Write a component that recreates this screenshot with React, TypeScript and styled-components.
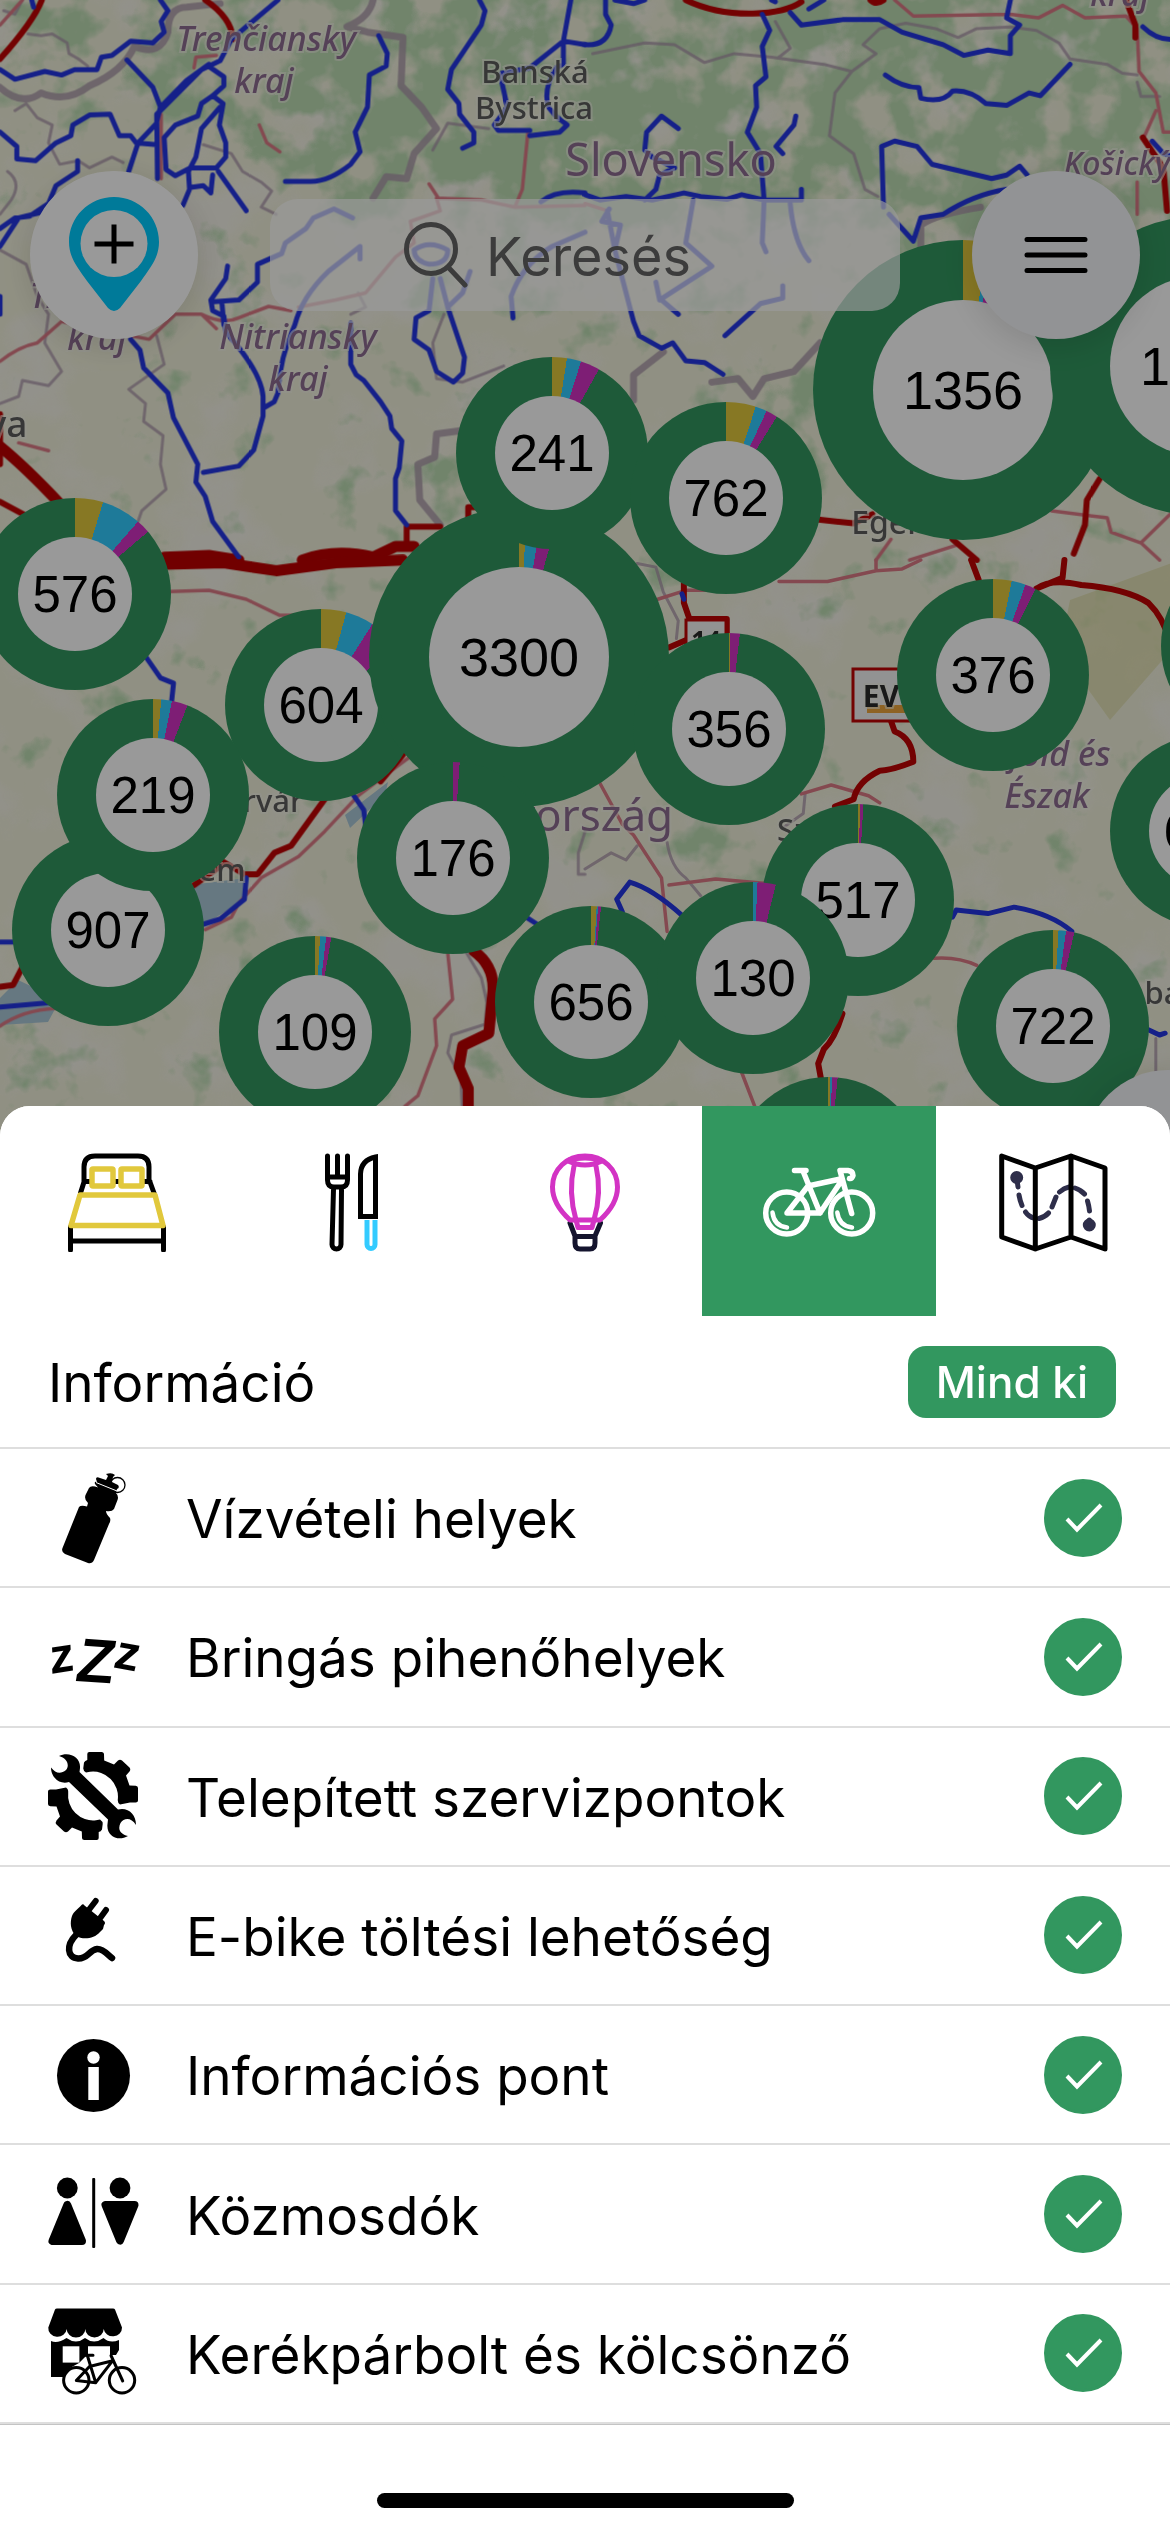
import React, { useState } from "react";
import styled, { createGlobalStyle } from "styled-components";

const GREEN = "#32975f";
const YELLOW = "#e1c83c";
const BLUE = "#33cbff";
const MAGENTA = "#d333c4";
const UI_FONT = '"Inter", "Roboto", "Liberation Sans", sans-serif';

const GlobalStyle = createGlobalStyle`
  *, *::before, *::after { box-sizing: border-box; }
  body { margin: 0; background: #fff; color: #000; font-family: ${UI_FONT}; }
  button, input { font: inherit; }
`;

const Screen = styled.main`
  display: flex;
  flex-direction: column;
  min-height: 100vh;
  overflow: hidden;
`;

/* ---------- map ---------- */

const MapArea = styled.section`
  position: relative;
  height: 1136px;
  flex: none;
  overflow: hidden;
  background: #f0efdc;
`;

const MapDrawing = styled.svg`
  display: block;
  width: 100%;
  height: 100%;
`;

const ClusterPin = styled.button<{ $x: number; $y: number; $r: number; $ring: string }>`
  position: absolute;
  left: ${(p) => p.$x - p.$r}px;
  top: ${(p) => p.$y - p.$r}px;
  width: ${(p) => p.$r * 2}px;
  height: ${(p) => p.$r * 2}px;
  display: flex;
  align-items: center;
  justify-content: center;
  padding: 0;
  border: 0;
  border-radius: 50%;
  background: ${(p) => p.$ring};
`;

const ClusterCount = styled.span<{ $large: boolean }>`
  display: flex;
  align-items: center;
  justify-content: center;
  width: ${(p) => (p.$large ? 180 : 114)}px;
  height: ${(p) => (p.$large ? 180 : 114)}px;
  border-radius: 50%;
  background: #fff;
  color: #000;
  font-family: "Liberation Sans", Arial, sans-serif;
  font-size: ${(p) => (p.$large ? 54 : 51)}px;
`;

const Toolbar = styled.header`
  position: absolute;
  inset: 171px 30px auto;
  display: flex;
  align-items: center;
  gap: 72px;
`;

const RoundButton = styled.button<{ $tint: string }>`
  flex: none;
  display: grid;
  place-items: center;
  width: 168px;
  height: 168px;
  padding: 0;
  border: 0;
  border-radius: 50%;
  background: ${(p) => p.$tint};
  box-shadow: 0 6px 36px rgba(0, 0, 0, 0.14);
`;

const LocateButton = styled(RoundButton)`
  position: absolute;
  right: -82px;
  bottom: -102px;
`;

const SearchBox = styled.label`
  flex: 1;
  display: flex;
  align-items: center;
  justify-content: center;
  gap: 18px;
  height: 112px;
  border-radius: 28px;
  background: rgba(255, 255, 255, 0.7);
  color: #646464;
`;

const SearchInput = styled.input`
  width: 280px;
  height: 80px;
  padding: 3px 0 0;
  border: 0;
  outline: 0;
  background: transparent;
  color: #646464;
  font-size: 54px;
  &::placeholder { color: #646464; opacity: 1; }
`;

const Dimmer = styled.div`
  position: absolute;
  inset: 0;
  background: rgba(0, 0, 0, 0.4);
  pointer-events: none;
`;

/* ---------- sheet ---------- */

const Sheet = styled.section`
  position: relative;
  flex: 1;
  display: flex;
  flex-direction: column;
  margin-top: -30px;
  border-radius: 30px 30px 0 0;
  background: #fff;
  overflow: hidden;
`;

const Tabs = styled.nav`
  display: grid;
  grid-template-columns: repeat(5, 1fr);
`;

const Tab = styled.button<{ $active: boolean }>`
  display: flex;
  justify-content: center;
  align-items: flex-start;
  height: 210px;
  padding: 46px 0 0;
  border: 0;
  background: ${(p) => (p.$active ? GREEN : "#fff")};
`;

const GroupHeader = styled.div`
  display: flex;
  align-items: center;
  justify-content: space-between;
  height: 133px;
  padding: 0 54px 0 48px;
  border-bottom: 2px solid #dedede;
`;

const GroupTitle = styled.h2`
  margin: 0;
  padding-top: 3px;
  font-size: 53px;
  font-weight: 400;
`;

const ToggleAll = styled.button`
  height: 72px;
  padding: 0 28px;
  border: 0;
  border-radius: 18px;
  background: ${GREEN};
  color: #fff;
  font-size: 44px;
  font-weight: 500;
`;

const Options = styled.ul`
  flex: 1;
  display: grid;
  grid-auto-rows: 1fr;
  margin: 0;
  padding: 0;
  list-style: none;
  border-bottom: 1px solid #c4c4c4;
`;

const Option = styled.li`
  display: flex;
  border-bottom: 2px solid #dedede;
`;

const OptionLabel = styled.label`
  flex: 1;
  display: flex;
  align-items: center;
  gap: 48px;
  padding: 0 48px;
`;

const OptionName = styled.span`
  flex: 1;
  padding-top: 3px;
  font-size: 53px;
  line-height: 64px;
  white-space: nowrap;
`;

const Check = styled.span`
  display: grid;
  place-items: center;
  > * { grid-area: 1 / 1; }
`;

const CheckInput = styled.input`
  appearance: none;
  width: 78px;
  height: 78px;
  margin: 0;
  border: 3px solid ${GREEN};
  border-radius: 50%;
  background: #fff;
  &:checked { background: ${GREEN}; }
`;

const CheckMark = styled.svg`
  position: relative;
  pointer-events: none;
`;

const HomeArea = styled.footer`
  display: flex;
  justify-content: center;
  align-items: flex-end;
  height: 107px;
  padding-bottom: 24px;
`;

const HomeBar = styled.div`
  width: 417px;
  height: 15px;
  border-radius: 8px;
  background: #000;
`;

/* ---------- map data ---------- */

type Cluster = { n: string; x: number; y: number; big?: boolean; cuts: [number, number, number] };

/* cuts: end angles of the yellow, blue and magenta slices; painted in list order */
const clusters: Cluster[] = [
  { n: "1356", x: 963, y: 390, big: true, cuts: [10, 12.5, 16] },
  { n: "1082", x: 1200, y: 366, big: true, cuts: [0, 0, 0] },
  { n: "576", x: 75, y: 594, cuts: [17, 41, 49.5] },
  { n: "604", x: 321, y: 705, cuts: [15.3, 32.4, 53] },
  { n: "3300", x: 519, y: 657, big: true, cuts: [3, 9, 15.5] },
  { n: "241", x: 552, y: 453, cuts: [9, 17.6, 29.3] },
  { n: "762", x: 726, y: 498, cuts: [18, 25, 32] },
  { n: "356", x: 729, y: 729, cuts: [0.8, 0.8, 6.5] },
  { n: "176", x: 453, y: 858, cuts: [0, 0, 4] },
  { n: "907", x: 108, y: 930, cuts: [0, 0, 0] },
  { n: "219", x: 153, y: 795, cuts: [4.9, 11.4, 21] },
  { n: "109", x: 315, y: 1032, cuts: [3, 6.7, 9.8] },
  { n: "656", x: 591, y: 1002, cuts: [3.4, 4.2, 6] },
  { n: "517", x: 858, y: 900, cuts: [1.2, 1.2, 3.2] },
  { n: "130", x: 753, y: 978, cuts: [0, 2.7, 13.7] },
  { n: "376", x: 993, y: 675, cuts: [11.2, 19.8, 26.3] },
  { n: "722", x: 1053, y: 1026, cuts: [3.3, 7.8, 12.8] },
  { n: "641", x: 1206, y: 831, cuts: [0, 0, 0] },
  { n: "388", x: 1257, y: 646, cuts: [0, 0, 0] },
  { n: "254", x: 828, y: 1173, cuts: [1.3, 2.5, 5.8] },
];

const ring = ([a, b, c]: [number, number, number]) =>
  `conic-gradient(${YELLOW} 0 ${a}deg, ${BLUE} ${a}deg ${b}deg, ${MAGENTA} ${b}deg ${c}deg, ${GREEN} ${c}deg)`;

type TileData = {
  at: [number, number];
  border?: string;
  borderWide?: string;
  pink?: string;
  red?: string;
  redWide?: string;
  blue?: string;
};

const tiles: TileData[] = [
  {
    at: [0, 0],
    border:
      "M75 95L110 100 140 95 180 120 185 150 210 165 235 185M60 0L40 40 10 30M40 310L70 290 100 330 140 350 130 400 160 460 210 450 240 470 300 440 330 455M545 405L620 430 650 480 700 510 728 535 700 580 740 600M20 480Q60 510 30 560L0 600M0 700L70 740 100 830 130 880 120 960 165 1040 130 1080 60 1065 50 1110 0 1130M420 940L440 1020 345 1090 390 1130 385 1180 437 1220 430 1300 445 1370 380 1430 370 1460M960 820L980 860 940 880M1190 880L1160 960 1170 1060 1240 1070 1350 1025M1310 360L1200 345 1160 420",
    borderWide:
      "M0 245Q60 300 110 260Q180 290 240 240Q330 200 360 130Q430 160 450 90Q450 20 500 20L590 10M1000 0Q990 50 930 75L985 90 1080 105 1075 240 1130 300 1170 360 1110 430 1090 500 1035 495 1000 555M1240 1205L1170 1215 1165 1280 1120 1300 1125 1400 1180 1470",
    pink:
      "M0 1012Q50 970 100 960L165 900 300 930 400 950 470 880 540 880 580 920M540 880Q600 910 640 890L720 858 780 870M800 860L900 840 980 820 1060 720 1110 680 1100 620 1180 590 1170 555 1290 560M1150 515L1175 555M1290 560L1380 580 1400 530 1415 370M1380 580L1568 575M695 350L715 400 750 425M520 190L525 160 580 155M432 320V500M50 1240L130 1262M0 70L60 0",
    red: "M112 0Q90 60 0 165M550 0Q620 50 625 110M0 1405L80 1450M1090 1530L1090 1475 1180 1475M1255 1470V1420H1300M0 1160V1300",
    redWide: "M0 1250Q70 1310 160 1410M440 1560L560 1555 640 1568M810 1568Q900 1535 1000 1560L1060 1530 1110 1530",
    blue:
      "M85 0L90 20M430 0L450 30 432 60 440 90 410 120 350 115 300 155 272 160 260 195 200 195 165 210 120 200 40 222 0 195M340 168L410 245 430 300 420 340M745 0L620 110 590 170 540 195 420 320 422 500M565 190L600 215 600 240 570 268 540 290 530 325 470 350 440 385 445 475 470 492 510 470 580 470 605 440 605 400 588 350 598 290 570 268M430 300L500 225 560 180M590 300L540 360 525 440 505 480 508 530 490 575M585 480L660 590M510 525L545 520 565 540 570 490M0 370L45 410 45 445 95 450 150 400 190 380 195 350 240 322 295 320 320 380 350 380 365 400 420 405M420 345L370 400 345 480M208 450V480L150 520 130 570 80 605 40 610 0 640M0 690L50 610 130 590M0 880V830M1015 100L1038 150 1035 185 990 210 985 300 952 370 965 425 940 460Q880 510 830 508H765M1285 0L1300 30 1290 70 1210 195 1200 250 1230 290 1232 320 1270 370 1270 400 1240 415M1530 0L1510 115 1510 180 1490 190Q1455 250 1470 300L1490 325 1520 350 1500 370 1420 380M1568 125L1510 115 1420 190 1345 205 1345 230 1360 300 1325 350 1335 365H1420M945 610L895 585 840 610 820 640 765 680 755 710 690 740 690 790 640 840 575 845M610 745L605 780 565 840 570 870 600 885 605 930Q700 1040 705 1110L705 1165 680 1260 640 1305 545 1323M595 850L600 910M965 725V690L880 760Q810 830 790 910Q750 1000 745 1100L735 1125 710 1140M350 950L375 980 385 1030 450 1100 465 1170 530 1300 525 1350 550 1390 570 1460 640 1560M940 905V1020L955 1050 975 1065 1020 1125 1045 1165 1050 1200 1077 1235 1070 1310 1060 1340V1430L1090 1470M1160 780L1150 870 1115 890 1110 950 1150 980 1170 1040 1215 1070 1240 1045 1245 1000 1200 860 1180 780M1260 760L1240 820 1200 860M1375 890L1370 830Q1400 740 1480 690L1568 650M1450 565Q1490 530 1568 540M1110 700Q1150 670 1200 700Q1200 740 1150 740Q1110 730 1110 700",
  },
  {
    at: [585, 0],
    border:
      "M20 150L160 120 240 125 320 175 400 150 500 160 640 180 715 200 780 150 745 125 790 80 860 65M510 60L550 135 520 160M715 200L670 260 655 380 720 430 750 530 785 550M860 65L940 80 1000 105 1050 80 1140 75 1210 85 1270 120 1300 165 1400 180 1440 205 1480 210M1480 230L1490 270 1540 270",
    borderWide: "M130 1120L130 1050 210 985M340 1070L410 1060 450 1110 480 1060 560 1040 630 960M900 690V630Q940 600 1060 580",
    pink:
      "M830 0L880 45 1140 40 1215 50 1280 15 1340 50 1450 45 1480 80 1485 200 1530 260 1550 370 1568 370M1530 310L1500 380M1480 510V600M1140 40L1215 50M0 570L60 590M1250 1430L1400 1450 1410 1490 1490 1520 1568 1440M1490 1520L1540 1568M870 1568L1000 1525M780 1568L820 1510",
    red: "M270 0Q350 40 450 38Q540 35 580 5M765 0Q780 15 800 0M1450 0L1475 70V105M1495 385L1550 470 1560 590M625 1455L720 1465 770 1440M985 1510L1050 1568M1380 1340L1345 1400 1340 1470 1310 1550",
    blue:
      "M55 0V40L70 70Q60 130 0 125M475 40L495 85 475 130 485 215 457 240 460 300 435 370 470 430 480 560M550 35L580 70 690 55 790 55 850 90 960 125 1015 155 1080 140 1140 150 1140 100 1165 70 1130 50 1140 0M600 25L640 0M80 0L130 10 160 0M805 210Q850 245 895 245L900 275Q960 290 985 255Q1030 250 1075 290L1130 295 1190 260 1220 268 1300 180M250 360L205 325 165 370 160 420 180 440 240 470 200 490 190 530 160 560M565 325L560 350 512 410 530 430M0 545L40 560 110 550 180 560 265 540 310 550 380 558 420 545 480 560H580V530M800 580L795 410 830 395 890 410 930 460 1090 500 1130 490 1165 465 1185 490M815 600L880 675 900 610 960 600Q1040 545 1130 530M60 590L80 700 130 900 145 940 205 975 235 960 270 1010 320 1015 370 1048M65 585L45 620 95 630 80 700M290 560L270 680 340 745 200 840 190 790M205 840L250 880M480 560L475 680 485 705M550 570Q560 680 600 730M530 800V835L470 850 375 940M1495 75Q1530 110 1568 110M1520 395L1550 430 1568 435M500 0L510 5",
  },
  {
    at: [0, 560],
    border: "M1250 1100L1290 1170 1305 1240 1300 1300 1210 1330 1200 1380 1235 1450 1240 1568M1568 760L1550 820 1550 880 1568 880",
    pink: "M455 88L560 85 660 110 750 155H820M1100 550L960 660 870 760 800 830 700 890 640 960 620 1000 550 1035M0 1305Q60 1260 150 1255M1200 1100L1213 1230 1165 1285 1170 1360 1120 1500 1085 1530",
    red: "M870 670L780 800 735 820 690 880 655 880 590 840M520 910L600 850M0 1195L35 1190 60 1140M1080 545L1020 620",
    redWide: "M1270 1095Q1330 1140 1320 1220L1310 1325 1240 1360 1230 1420 1255 1480V1568M440 12L600 8 740 30 900 8 1080 0",
    blue: "M390 270L430 330 465 345 460 395M945 655L975 700 980 745M660 890L655 950 590 1005 545 1020M0 1070H40M0 1252L130 1240M1410 1000L1440 1020",
  },
  {
    at: [585, 560],
    border: "M140 10L190 20 210 90 250 170 245 220M590 655L585 710 530 750M220 790Q230 860 270 890L310 940M0 865L70 820 110 840 140 800M1530 1340V1430",
    pink: "M520 60L650 60 780 30 850 25 900 0M780 0V30M195 110L270 85H340M40 625L100 740 130 770 205 890 220 1040M580 655L660 630 760 660 790 680M225 910L350 893 480 905M935 1115Q1000 1110 1050 1135M420 1435L455 1530",
    red: "M265 65V120L280 165H380V205M225 245L270 225M1035 0L1055 55M1285 0L1280 50 1210 80M1210 80Q1250 50 1330 70Q1450 80 1510 120Q1550 160 1568 230M820 450L830 480Q880 500 880 565Q820 590 790 590Q730 620 720 670L670 690M690 1270Q670 1340 640 1370L625 1410 632 1450",
    blue: "M100 985L85 950 120 902Q180 920 260 995M985 1000L995 980 1080 990 1150 972Q1250 990 1305 1040M1510 1315L1540 1330 1555 1325M260 95L265 110",
  },
];

const K = [585 / 1568, 560 / 1568];

const labels = [
  { t: "Trenčiansky", x: 266, y: 51, s: 34, area: true },
  { t: "kraj", x: 264, y: 93, s: 34, area: true },
  { t: "Trnavský", x: 97, y: 308, s: 34, area: true },
  { t: "kraj", x: 97, y: 350, s: 34, area: true },
  { t: "Nitriansky", x: 298, y: 349, s: 34, area: true },
  { t: "kraj", x: 298, y: 391, s: 34, area: true },
  { t: "Košický", x: 1117, y: 175, s: 32, area: true },
  { t: "kraj", x: 1120, y: 6, s: 34, area: true },
  { t: "föld és", x: 1060, y: 766, s: 34, area: true },
  { t: "Észak", x: 1047, y: 808, s: 34, area: true },
  { t: "Banská", x: 535, y: 83, s: 31 },
  { t: "Bystrica", x: 534, y: 119, s: 31 },
  { t: "Eger", x: 886, y: 534, s: 32 },
  { t: "Székesfehérvár", x: 190, y: 812, s: 31 },
  { t: "em", x: 222, y: 881, s: 31 },
  { t: "va", x: 7, y: 437, s: 37 },
  { t: "Sz", x: 793, y: 841, s: 31 },
  { t: "bá", x: 1163, y: 1004, s: 31 },
];

const countries = [
  { t: "Slovensko", x: 671, y: 176, s: 45 },
  { t: "Magyarország", x: 526, y: 831, s: 44 },
];

function Tile({ tile }: { tile: TileData }) {
  const line = (d: string | undefined, stroke: string, w: number, o = 1) =>
    d && <path d={d} stroke={stroke} strokeWidth={w} opacity={o} vectorEffect="non-scaling-stroke" />;
  return (
    <g
      transform={`translate(${tile.at[0]} ${tile.at[1]}) scale(${K[0]} ${K[1]})`}
      fill="none"
      strokeLinecap="round"
      strokeLinejoin="round"
    >
      {line(tile.border, "#a893a8", 3, 0.75)}
      {line(tile.borderWide, "#ad9dab", 7, 0.85)}
      {line(tile.pink, "#dc7a86", 3.5)}
      {line(tile.red, "#c00404", 6)}
      {line(tile.redWide, "#bc0000", 11)}
      {line(tile.blue, "#2436e4", 5)}
    </g>
  );
}

function BaseMap() {
  return (
    <MapDrawing viewBox="0 0 1170 1136" preserveAspectRatio="xMinYMin slice" aria-hidden="true">
      <defs>
        <filter id="forest" x="0" y="0" width="1170" height="1136" filterUnits="userSpaceOnUse">
          <feGaussianBlur in="SourceAlpha" stdDeviation="26" result="area" />
          <feTurbulence type="fractalNoise" baseFrequency="0.022" numOctaves="4" seed="8" />
          <feColorMatrix values="0 0 0 0 0  0 0 0 0 0  0 0 0 0 0  1 0 0 0 0" result="noise" />
          <feComposite in="area" in2="noise" operator="arithmetic" k2="0.5" k3="1" />
          <feComponentTransfer result="patches">
            <feFuncA type="linear" slope="5" intercept="-3.9" />
          </feComponentTransfer>
          <feFlood floodColor="#bcdcb3" />
          <feComposite in2="patches" operator="in" />
        </filter>
        <filter id="towns" x="0" y="0" width="1170" height="1136" filterUnits="userSpaceOnUse">
          <feTurbulence type="fractalNoise" baseFrequency="0.012" numOctaves="4" seed="21" />
          <feColorMatrix values="0 0 0 0 0.92  0 0 0 0 0.9  0 0 0 0 0.88  4 0 0 0 -2" />
        </filter>
      </defs>
      <rect width="1170" height="1136" fill="#f1f1db" />
      <rect width="1170" height="1136" filter="url(#towns)" opacity="0.6" />
      <g filter="url(#forest)">
        <rect width="1170" height="1136" opacity="0.28" />
        <path d="M-40-40H170L150 170 60 110-40 160Z" opacity="0.45" />
        <path d="M170-40H1210V250L1000 240 850 260 760 230 500 220 280 190 230 130 130 100Z" opacity="0.7" />
        <path d="M290-40H1210V190H560L330 180Z" opacity="0.6" />
        <path d="M440 190H700L660 330 560 350 440 320Z" opacity="0.4" />
        <path d="M690 380L860 330 840 520 700 440Z" opacity="0.6" />
        <path d="M420 440H520V560H430Z" opacity="0.7" />
        <path d="M120 220H260L230 300H140Z" opacity="0.4" />
        <path d="M300 580H400V640H300ZM0 960H110V1136H0Z" opacity="0.4" />
        <path d="M650 820H780V900H660Z" opacity="0.4" />
      </g>
      <path d="M1070 600L1180 560V640L1110 720 1060 650Z" fill="#dbd89e" opacity="0.6" />
      <g fill="#aac8d8">
        <path d="M190 885L246 878 244 900 205 924 186 920Z" />
        <path d="M0 998L18 980 60 1000 48 1022 0 1025Z" />
        <path d="M345 815L388 782 385 795 350 828Z" />
      </g>
      {tiles.map((t) => (
        <Tile key={t.at.join()} tile={t} />
      ))}
      <g stroke="#c00404" strokeWidth="3" fill="#f4f4f4">
        <rect x="686" y="620" width="40" height="44" />
        <rect x="853" y="669" width="64" height="52" />
      </g>
      <rect x="867" y="705" width="60" height="8" fill="#eda63c" />
      <g fontFamily='"Noto Sans", sans-serif' textAnchor="middle" stroke="#f3f3e8" strokeWidth="4" paintOrder="stroke" strokeOpacity="0.6">
        {labels.map((l) => (
          <text
            key={l.t + l.y}
            x={l.x}
            y={l.y}
            fontSize={l.s}
            fill={l.area ? "#8e6d92" : "#5c5c5c"}
            fontStyle={l.area ? "italic" : "normal"}
            fontWeight={500}
          >
            {l.t}
          </text>
        ))}
        {countries.map((l) => (
          <text key={l.t} x={l.x} y={l.y} fontSize={l.s} fill="#8e6d92">
            {l.t}
          </text>
        ))}
        <text x="881" y="707" fontSize="30" fontWeight="700" fill="#2a2a2a">EV</text>
        <text x="706" y="650" fontSize="26" fontWeight="700" fill="#2a2a2a">14</text>
      </g>
    </MapDrawing>
  );
}

/* ---------- icons ---------- */

const TabIcon = ({ children }: { children: React.ReactNode }) => (
  <svg width="120" height="100" viewBox="-10 0 120 100" fill="none" strokeWidth="5" strokeLinecap="round" strokeLinejoin="round" aria-hidden="true">
    {children}
  </svg>
);

const BedIcon = () => (
  <TabIcon>
    <path stroke="#000" d="M17 30V15Q17 4 28 4H71Q82 4 82 15V30M17 29.5H83M17 30L13.5 41M83 30L87 41M3.5 75V98M96.5 75V98M4 89H96" />
    <g stroke={YELLOW} strokeWidth="5.5" fill="#fff">
      <rect x="25" y="17" width="21" height="17" rx="1" />
      <rect x="54" y="17" width="21" height="17" rx="1" />
      <path d="M13 43H88L96 73.5H4Z" />
    </g>
  </TabIcon>
);

const CutleryIcon = () => (
  <TabIcon>
    <g stroke="#000">
      <path d="M26.5 4V28Q26.5 35 33 35H40Q46.5 35 46.5 28V4M36.5 4V24M26.5 25H46.5M32.5 37L31 92.5A4.5 4.5 0 0 0 40 92.5L40.5 37" />
      <path strokeLinejoin="miter" d="M74.5 5V64.5H59.5V22Q60 8 74.5 5Z" />
    </g>
    <path stroke={BLUE} strokeLinecap="butt" d="M66 68V92.5A4 4 0 0 0 74 92.5V68" />
  </TabIcon>
);

const BalloonIcon = () => (
  <TabIcon>
    <path stroke="#14142e" d="M35 71L40 84M65.5 71L60 84M40 84.5H60V91Q60 97 55 97H45Q40 97 40 91Z" />
    <g stroke={MAGENTA}>
      <path d="M35 68C24 58 17.5 46 17.5 35C17.5 17 32 4 50 4C68 4 82.5 17 82.5 35C82.5 46 76 58 65 68Z" />
      <path d="M33 9Q50 17 67 9M39 14Q33 40 41 68L43 75.5H57L59 68Q67 40 61 14M34 8Q50 4 66 8" />
    </g>
  </TabIcon>
);

const BikeIcon = () => (
  <TabIcon>
    <g stroke="#fff" strokeWidth="5.5">
      <circle cx="17.7" cy="61" r="21" />
      <circle cx="82.7" cy="61" r="21" />
      <path d="M25.5 18.5H37M34 19L51 61H18L39 34 71.5 27M51 61L73 28M71 18.5L82.7 61.5M71 18.5H79Q84 19 84 23.5Q83 27 80.5 26.5" />
      <path strokeWidth="4.5" d="M3.5 60.5Q5 74 18 75.5M68.3 60.5Q70 74 83 75.5" />
    </g>
  </TabIcon>
);

const RouteMapIcon = () => (
  <TabIcon>
    <g stroke="#2e2e4a">
      <path d="M16 43Q17 49 19 53.5M22.5 60Q26 65 31 66M36 66.5Q42 65 45.5 61M49 55Q51 50 53 45M56.5 40Q61 36 66 35M72 36Q78 38 81.5 42M84.5 49Q86 54 86.5 59M14 28L15 35M86.3 68V72" />
      <circle cx="13.7" cy="25.5" r="4" fill="#2e2e4a" />
      <circle cx="86.3" cy="73" r="4" fill="#2e2e4a" />
    </g>
    <path stroke="#000" d="M-1.3 4L32.3 16 68 4 102 16V97L68 85 32.3 97-1.3 85ZM32.3 16V97M68 4V85" />
  </TabIcon>
);

const RowIcon = ({ children }: { children: React.ReactNode }) => (
  <svg width="90" height="90" viewBox="0 0 90 90" aria-hidden="true" overflow="visible">
    {children}
  </svg>
);

const BottleIcon = () => (
  <RowIcon>
    <path d="M31 34Q33 32 39 33.5L40 30Q36 27 37.5 22L41 15Q43 12 50 14.5L47 11Q46 8 49 9L48 6Q48 3 52 5L58 7 60 3 58 1Q64-1 67 2L65 4 64 9 70 12Q72 15 69 16L68 20Q71 23 69.5 27L66 36Q64 39 58 38Q58 41 62 45Q63 48 61 51L46 87Q44 91 40 90L17 81Q13 79 14.5 75Z" />
    <circle cx="69.5" cy="12" r="7.5" fill="none" stroke="#000" strokeWidth="1.3" />
    <path d="M48 9.5L69 18" stroke="#fff" strokeWidth="1" />
  </RowIcon>
);

const SleepIcon = () => (
  <RowIcon>
    <g fontFamily='"Liberation Sans", sans-serif' fontWeight="700" textAnchor="middle">
      <text transform="translate(14.500 60) rotate(-9) skewX(-6)" fontSize="49">z</text>
      <text transform="translate(45 70) rotate(4) skewX(-6)" fontSize="62">Z</text>
      <text transform="translate(76 57.500) rotate(10) skewX(-4)" fontSize="49">z</text>
    </g>
  </RowIcon>
);

const gearHalf =
  "M39.3 3Q39.3 1 41.3 1L53.5 1Q56 1 56 3.5L56.2 9.5 66 13.5 70 9.5Q72 8 74 9.5L81.5 16.5Q83 18.5 81.5 20.5L78 24.5 81.5 34.5 87.7 34.8Q90 35 90 37V49.5Q90 51.5 87.7 51.5H82L72 53.5Q69.5 52 69.8 48.5A25 25 0 0 0 42 20.8L38 21.5Q35 19.5 35.3 17L36 11.5Q37 9.5 39.3 9Z";

const RepairIcon = () => (
  <RowIcon>
    <path d={gearHalf} />
    <path d={gearHalf} transform="rotate(180 45 45)" />
    <path d="M11 5C22 0 33 7 32 17L31.5 21 70 58.5C80 56 88 63 88 74C83 66 76 67 72.5 72C69.5 78 72 83 80 85C70 91 58 85 59.5 73L60 68.5 21 31C11 34 3 26 3 16.5C8 23 13 23 18 19C22 14 19 7 11 5Z" />
  </RowIcon>
);

const PlugIcon = () => (
  <RowIcon>
    <path d="M33.5 15Q35 13.5 36.5 15.5L56 31Q58 33 56 35L55 39 52 42C46 49 35 50 28 46C22 40 22 32 24 26C26 21 30 19 33.5 15Z" />
    <g fill="none" stroke="#000" strokeWidth="6" strokeLinecap="round">
      <path d="M47.7 11L40 21M58 20L50 31" />
      <path strokeWidth="6.5" d="M28 45C18 55 19 68 30 68.500C40 69 41 60 49 59C55 58.5 60 65 64 68" />
    </g>
  </RowIcon>
);

const InfoIcon = () => (
  <RowIcon>
    <circle cx="45.5" cy="45.5" r="36.5" />
    <circle cx="45.5" cy="27.5" r="6.2" fill="#fff" />
    <rect x="40.3" y="37" width="10.5" height="33" fill="#fff" />
  </RowIcon>
);

const RestroomIcon = () => (
  <RowIcon>
    <circle cx="19.3" cy="19" r="10.4" />
    <circle cx="72" cy="19" r="10.4" />
    <rect x="44.2" y="9" width="3" height="70" rx="1" />
    <g stroke="#000" strokeWidth="8" strokeLinejoin="round">
      <path d="M19.3 36L4.5 72H34Z" />
      <path d="M57.5 36H86.5L72 71.5Z" />
    </g>
  </RowIcon>
);

const BikeShopIcon = () => (
  <RowIcon>
    <path d="M3 33Q9.5 36 18.5 30Q28 37 37 30Q46 37 55.5 30Q62 36 71 32V42L68 47H62V38.3H40V46L31 55 22 60 15 69H3Z" />
    <rect x="14.7" y="38.3" width="16.7" height="16.3" fill="#fff" />
    <path d="M7 1.5Q7.5 .5 9 .5H65Q66.5 .5 67 1.5L74 19.5A9.2 8.5 0 0 1 55.7 21A9.2 8.5 0 0 1 37.3 21A9.2 8.5 0 0 1 18.7 21A9.2 8.5 0 0 1 .3 19.5Z" />
    <g fill="none" stroke="#000" strokeWidth="3" strokeLinecap="round" strokeLinejoin="round">
      <circle cx="28.3" cy="72.3" r="12.7" fill="#fff" />
      <circle cx="74" cy="72.3" r="12.7" />
      <path d="M36.5 47.3H45M39.5 48L47.7 74.7 28.3 72.5 41.5 58.5 64.7 52.7 47.7 74.7M63 47.5L74.7 73" />
    </g>
  </RowIcon>
);

const tabs = [
  { name: "Szállás", icon: <BedIcon /> },
  { name: "Vendéglátás", icon: <CutleryIcon /> },
  { name: "Élmény", icon: <BalloonIcon /> },
  { name: "Kerékpár", icon: <BikeIcon /> },
  { name: "Útvonalak", icon: <RouteMapIcon /> },
];

const options = [
  { name: "Vízvételi helyek", icon: <BottleIcon /> },
  { name: "Bringás pihenőhelyek", icon: <SleepIcon /> },
  { name: "Telepített szervizpontok", icon: <RepairIcon /> },
  { name: "E-bike töltési lehetőség", icon: <PlugIcon /> },
  { name: "Információs pont", icon: <InfoIcon /> },
  { name: "Közmosdók", icon: <RestroomIcon /> },
  { name: "Kerékpárbolt és kölcsönző", icon: <BikeShopIcon /> },
];

export default function App() {
  const [tab, setTab] = useState(3);
  const [on, setOn] = useState(() => options.map(() => true));

  return (
    <Screen>
      <GlobalStyle />
      <MapArea aria-label="Térkép">
        <BaseMap />
        {clusters.map((c) => (
          <ClusterPin key={c.n} $x={c.x} $y={c.y} $r={c.big ? 150 : 96} $ring={ring(c.cuts)}>
            <ClusterCount $large={!!c.big}>{c.n}</ClusterCount>
          </ClusterPin>
        ))}
        <Toolbar>
          <RoundButton $tint="#ffffff" aria-label="Új hely">
            <svg width="90" height="116" viewBox="0 0 90 116" aria-hidden="true">
              <path fill="#00cbff" d="M45 0C20 0 0 20 0 45C0 61 9 71 18 84L39 111Q45 117 51 111L72 84C81 71 90 61 90 45C90 20 70 0 45 0Z" />
              <circle cx="45" cy="46.5" r="33.5" fill="#fff" />
              <path d="M25.5 47H64.5M45 27.5V66.5" stroke="#000" strokeWidth="5" />
            </svg>
          </RoundButton>
          <SearchBox>
            <svg width="64" height="66" viewBox="0 0 64 66" fill="none" stroke="#646464" strokeWidth="5" strokeLinecap="round" aria-hidden="true">
              <circle cx="27" cy="27" r="24.5" />
              <path d="M44 45L61 63" />
            </svg>
            <SearchInput type="text" placeholder="Keresés" aria-label="Keresés" />
          </SearchBox>
          <RoundButton $tint="#f4f5f8" aria-label="Menü">
            <svg width="64" height="38" viewBox="0 0 64 38" stroke="#000" strokeWidth="5" strokeLinecap="round" aria-hidden="true">
              <path d="M3 3.5H61M3 19H61M3 34.5H61" />
            </svg>
          </RoundButton>
        </Toolbar>
        <LocateButton $tint="#f4f5f8" aria-label="Saját helyzet" />
        <Dimmer />
      </MapArea>

      <Sheet>
        <Tabs>
          {tabs.map((t, i) => (
            <Tab key={t.name} $active={i === tab} aria-label={t.name} aria-pressed={i === tab} onClick={() => setTab(i)}>
              {t.icon}
            </Tab>
          ))}
        </Tabs>
        <GroupHeader>
          <GroupTitle>Információ</GroupTitle>
          <ToggleAll onClick={() => setOn(options.map(() => false))}>Mind ki</ToggleAll>
        </GroupHeader>
        <Options>
          {options.map((o, i) => (
            <Option key={o.name}>
              <OptionLabel>
                {o.icon}
                <OptionName>{o.name}</OptionName>
                <Check>
                  <CheckInput
                    type="checkbox"
                    checked={on[i]}
                    onChange={() => setOn(on.map((v, j) => (j === i ? !v : v)))}
                  />
                  <CheckMark width="40" height="30" viewBox="0 0 40 30" fill="none" stroke="#fff" strokeWidth="4" aria-hidden="true">
                    <path d="M4 16L14 26.5 38 2" />
                  </CheckMark>
                </Check>
              </OptionLabel>
            </Option>
          ))}
        </Options>
        <HomeArea>
          <HomeBar />
        </HomeArea>
      </Sheet>
    </Screen>
  );
}
